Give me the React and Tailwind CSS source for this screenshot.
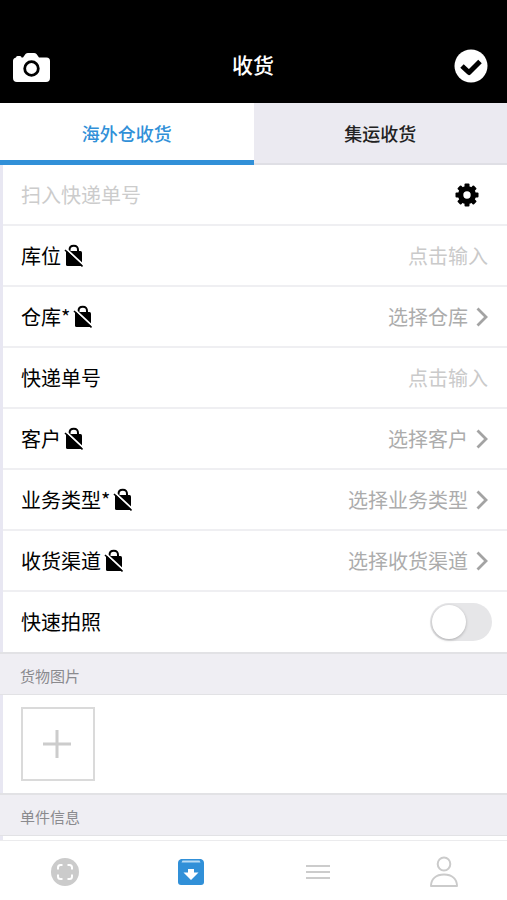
import { useState } from "react";

function UnlockedIcon() {
  return (
    <svg className="h-6 w-5 shrink-0" viewBox="0 0 20 24" aria-hidden="true">
      <path d="M6.500 8V6Q6.500 1.800 10.800 1.800T15 6V9" fill="none" stroke="#000" strokeWidth="2" />
      <path d="M3 7H17.500Q19 7 19 8.500V22H4.500Q3 22 3 20.500V8Z" fill="#000" />
      <path d="M3 4.800 21 21.600" fill="none" stroke="#fff" strokeWidth="2" />
      <path d="M2 6 19.500 22.500" fill="none" stroke="#000" strokeWidth="1.600" />
    </svg>
  );
}

const TEETH = [0, 45, 90, 135, 180, 225, 270, 315];

function GearIcon() {
  return (
    <svg className="h-6 w-6" viewBox="0 0 24 24" aria-hidden="true">
      {TEETH.map((angle) => (
        <rect key={angle} x="9.500" y="0.500" width="5" height="6" rx="1" transform={`rotate(${angle} 12 12)`} />
      ))}
      <circle cx="12" cy="12" r="6.400" fill="none" stroke="#000" strokeWidth="5.400" />
    </svg>
  );
}

function Row({ id, label, locked, children }) {
  return (
    <div className="flex h-[61px] items-center border-b-2 border-[#efeff2] pr-[19px] pl-[18px]">
      <label htmlFor={id} className="flex shrink-0 items-center gap-0.5 text-xl text-black">
        {label}
        {locked && <UnlockedIcon />}
      </label>
      {children}
    </div>
  );
}

function TextRow({ id, label, locked }) {
  return (
    <Row id={id} label={label} locked={locked}>
      <input
        id={id}
        type="text"
        placeholder="点击输入"
        className="h-full min-w-0 flex-1 bg-transparent text-right text-xl text-black outline-none placeholder:text-[#cacaca]"
      />
    </Row>
  );
}

function SelectRow({ id, label, placeholder, locked }) {
  return (
    <Row id={id} label={label} locked={locked}>
      <select
        id={id}
        className="h-full min-w-0 flex-1 appearance-none bg-transparent text-right text-xl text-[#acacac] outline-none [text-align-last:right]"
      >
        <option>{placeholder}</option>
      </select>
      <svg className="ml-2 h-5 w-3 shrink-0" viewBox="0 0 12 20" fill="none" stroke="#a3a3a3" strokeWidth="2.800" aria-hidden="true">
        <path d="M1.500 1.500 10 10l-8.500 8.500" />
      </svg>
    </Row>
  );
}

function SectionTitle({ children }) {
  return (
    <h2 className="flex h-[43px] items-center border-t-2 border-b border-[#e2e2e5] bg-[#efeef3] pt-1 pl-5 text-[15px] text-[#8a8a8e]">
      {children}
    </h2>
  );
}

export default function App() {
  const [tab, setTab] = useState("overseas");
  const [quick, setQuick] = useState(false);
  const tabClass = (name) =>
    tab === name
      ? "border-b-[5px] border-[#3190d8] bg-white pt-0.5 text-[#3190d8]"
      : "border-b-2 border-[#dfdfe5] bg-[#ebeaf1] pb-px text-[#222222]";

  return (
    <div className="flex min-h-screen flex-col bg-white font-['Noto_Sans_CJK_SC',sans-serif]">
      <header className="grid h-[103px] grid-cols-[1fr_auto_1fr] items-center bg-black pt-7 pr-[19px] pl-3 text-white">
        <button type="button" aria-label="拍照" className="justify-self-start">
          <svg className="mt-1 h-8 w-[38px]" viewBox="0 0 38 32" aria-hidden="true">
            <path
              fill="#fff"
              d="M4 5.500Q4 4 5.500 4H8Q9.500 4 9.500 5.500H11L13.500 2Q14.500 1 16 1H22Q23.500 1 24.500 2L27 5.500H34.500Q38 5.500 38 9V26Q38 30 34 30H5Q1 30 1 26V9Q1 6 4 5.500Z"
            />
            <circle cx="19.500" cy="16.500" r="6.800" fill="none" stroke="#000" strokeWidth="2.800" />
          </svg>
        </button>
        <h1 className="pb-0.5 pl-1.5 text-[21px] leading-none font-medium">收货</h1>
        <button type="button" aria-label="确认" className="justify-self-end">
          <svg className="h-[34px] w-[34px]" viewBox="0 0 34 34" aria-hidden="true">
            <circle cx="17" cy="17" r="16.500" fill="#fff" />
            <path d="M8 17 15 23.500 26 12.500" fill="none" stroke="#000" strokeWidth="5" strokeLinejoin="round" />
          </svg>
        </button>
      </header>

      <div role="tablist" className="grid h-[62px] grid-cols-2 text-lg font-medium">
        <button type="button" role="tab" aria-selected={tab === "overseas"} onClick={() => setTab("overseas")} className={tabClass("overseas")}>
          海外仓收货
        </button>
        <button type="button" role="tab" aria-selected={tab === "consolidated"} onClick={() => setTab("consolidated")} className={tabClass("consolidated")}>
          集运收货
        </button>
      </div>

      <main className="flex flex-1 flex-col">
        <div className="border-l-[3px] border-[#e8e7f2]">
          <div className="flex h-[61px] items-center border-b-2 border-[#efeff2] pr-7 pl-[18px]">
            <input
              type="text"
              aria-label="扫入快递单号"
              placeholder="扫入快递单号"
              className="h-full min-w-0 flex-1 bg-transparent text-xl outline-none placeholder:text-[#cccccc]"
            />
            <button type="button" aria-label="设置">
              <GearIcon />
            </button>
          </div>
          <TextRow id="slot" label="库位" locked />
          <SelectRow id="warehouse" label="仓库*" placeholder="选择仓库" locked />
          <TextRow id="tracking" label="快递单号" />
          <SelectRow id="customer" label="客户" placeholder="选择客户" locked />
          <SelectRow id="business" label="业务类型*" placeholder="选择业务类型" locked />
          <SelectRow id="channel" label="收货渠道" placeholder="选择收货渠道" locked />
          <div className="flex h-[60px] items-center justify-between pr-[15px] pl-[18px]">
            <label htmlFor="quick" className="text-xl text-black">快速拍照</label>
            <input
              id="quick"
              type="checkbox"
              role="switch"
              checked={quick}
              onChange={(e) => setQuick(e.target.checked)}
              className="flex h-[38px] w-[62px] appearance-none items-center rounded-full bg-[#e6e6e8] p-0.5 before:h-[34px] before:w-[34px] before:rounded-full before:bg-white before:shadow-[0_1px_3px_#00000040] checked:justify-end checked:bg-[#3190d8]"
            />
          </div>
        </div>

        <SectionTitle>货物图片</SectionTitle>
        <div className="border-l-[3px] border-[#e8e7f2] py-3 pl-[18px]">
          <button type="button" aria-label="添加图片" className="flex h-[74px] w-[74px] items-center justify-center border-2 border-[#dadada] pr-[3px]">
            <svg className="h-7 w-7" viewBox="0 0 28 28" stroke="#cccccc" strokeWidth="3" aria-hidden="true">
              <path d="M14 0v28M0 14h28" />
            </svg>
          </button>
        </div>
        <SectionTitle>单件信息</SectionTitle>
        <div className="flex-1 border-l-[3px] border-[#e8e7f2]" />
      </main>

      <nav className="grid h-[60px] grid-cols-4 border-t border-[#ebebed] bg-white pt-0.5 pl-0.5">
        <button type="button" aria-label="扫描" className="flex items-center justify-center">
          <svg className="h-7 w-7" viewBox="0 0 28 28" aria-hidden="true">
            <circle cx="14" cy="14" r="14" fill="#cbcbcb" />
            <path
              d="M7 11.500V9.500Q7 7 9.500 7H11.500M16.500 7H18.500Q21 7 21 9.500V11.500M21 16.500V18.500Q21 21 18.500 21H16.500M11.500 21H9.500Q7 21 7 18.500V16.500"
              fill="none"
              stroke="#fff"
              strokeWidth="2"
            />
          </svg>
        </button>
        <button type="button" aria-label="收货" className="flex items-center justify-center">
          <svg className="h-[26px] w-[26px]" viewBox="0 0 26 26" aria-hidden="true">
            <path d="M3 0H23Q26 1 26 4V23Q26 26 23 26H3Q0 26 0 23V4Q0 1 3 0Z" fill="#3190d8" />
            <path d="M4.500 1.500H21.500L22.500 3.500H3.500Z" fill="#b9dcf5" />
            <path d="M10 10H16V13.500H20.500L13 21 5.500 13.500H10Z" fill="#fff" />
          </svg>
        </button>
        <button type="button" aria-label="菜单" className="flex items-center justify-center">
          <svg className="h-6 w-6" viewBox="0 0 24 24" stroke="#cccccc" strokeWidth="2" aria-hidden="true">
            <path d="M0 6h24M0 12h24M0 18h24" />
          </svg>
        </button>
        <button type="button" aria-label="我的" className="flex items-center justify-center">
          <svg className="h-8 w-7" viewBox="0 0 28 32" fill="none" stroke="#cbcbcb" strokeWidth="2" aria-hidden="true">
            <ellipse cx="14" cy="8" rx="6.300" ry="6.600" />
            <path d="M1 30C1 23 6 18.500 14 18.500S27 23 27 30Z" strokeLinejoin="round" />
          </svg>
        </button>
      </nav>
    </div>
  );
}
